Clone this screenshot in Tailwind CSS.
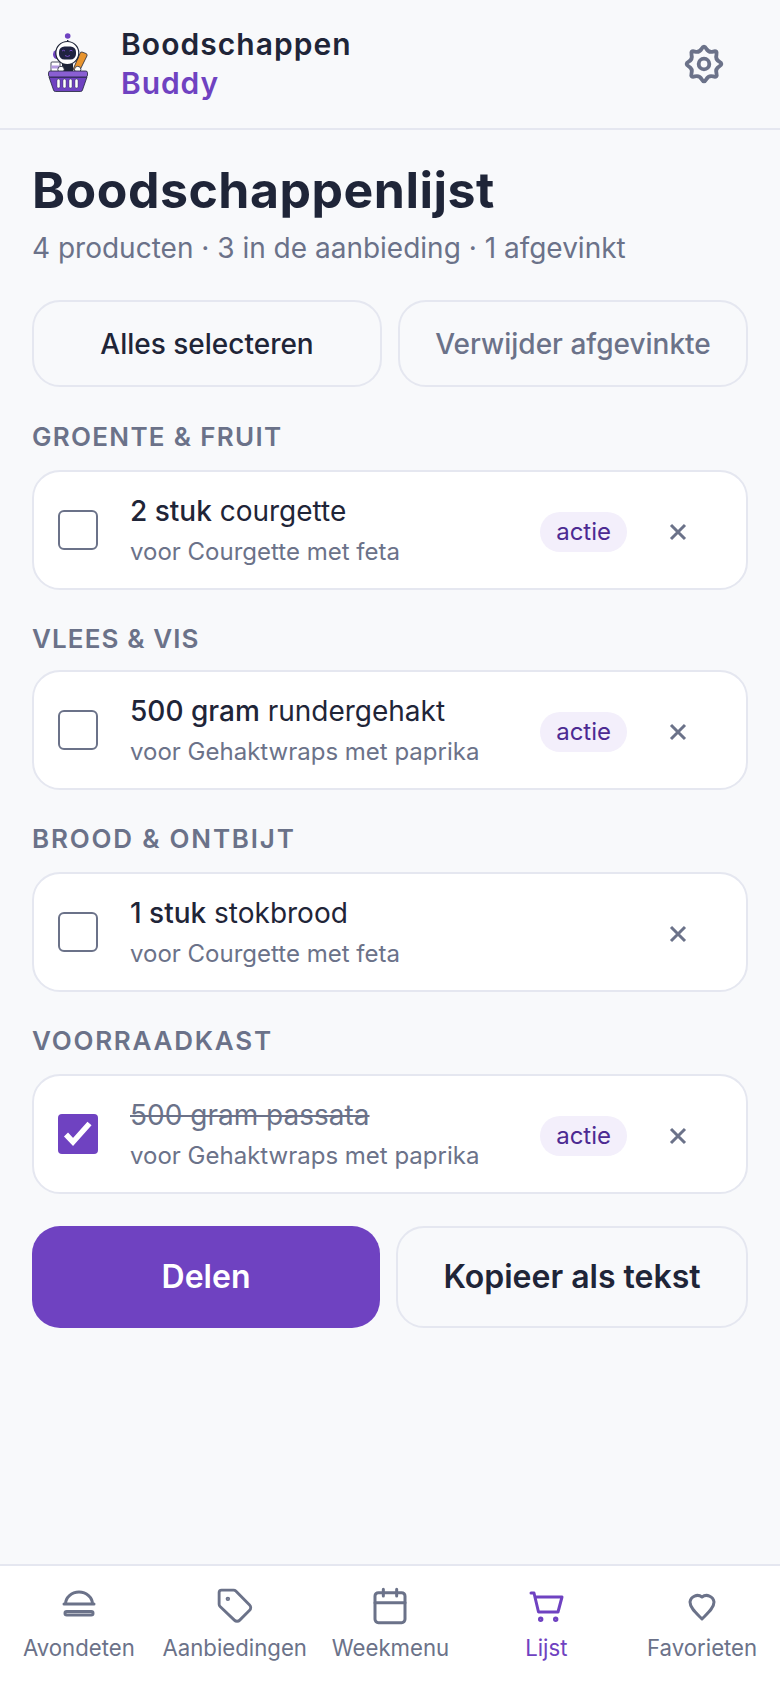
<!DOCTYPE html>
<html lang="nl">
<head>
  <meta charset="UTF-8" />
  <meta name="viewport" content="width=device-width, initial-scale=1.0" />
  <title>Boodschappenlijst</title>
  <script src="https://cdn.jsdelivr.net/npm/@tailwindcss/browser@4"></script>
</head>
<body class="bg-[#f8f9fb] font-['Inter',sans-serif] text-[#1f2538]">
<div class="h-[1688px] flex flex-col overflow-hidden">

  <!-- header -->
  <header class="h-[130px] shrink-0 flex items-center justify-between pl-[35px] pr-[54px] border-b-2 border-[#e5e7f0]">
    <div class="flex items-center gap-[16px]">
      <!-- logo -->
      <svg class="w-[70px] h-[80px]" viewBox="0 4 70 80">
        <path d="M32.700 20v8" stroke="#1f2538" stroke-width="1.400"/>
        <circle cx="32.700" cy="16" r="2.800" fill="#6f42c1"/>
        <path d="M22 30a4 4.500 0 0 0 0 9z" fill="#6f42c1"/>
        <path d="M47 32l4 1.500a1.800 1.800 0 0 1 1 2.300L44 52l-6-2.500 7-16a1.800 1.800 0 0 1 2-1.500z" fill="#e8952f" stroke="#1f2538" stroke-width="0.800"/>
        <circle cx="32.300" cy="33" r="11.500" fill="#fff" stroke="#1f2538" stroke-width="1.200"/>
        <rect x="24" y="26.500" width="17" height="13" rx="5.500" fill="#1f2340"/>
        <path d="M27 31q1.500-1.500 3 0M34.500 31q1.500-1.500 3 0M30 35.500q2.500 2 5 0" stroke="#7c4fd0" stroke-width="0.900" fill="none"/>
        <rect x="27" y="44" width="11" height="8" fill="#1f2538"/>
        <rect x="16" y="42" width="9" height="10" rx="1" fill="#fff" stroke="#1f2538" stroke-width="0.800"/>
        <rect x="16.400" y="45.500" width="8.200" height="3" fill="#b49ae0"/>
        <circle cx="26" cy="49.500" r="3.200" fill="#fff" stroke="#1f2538" stroke-width="0.800"/>
        <circle cx="42.700" cy="49.500" r="3.200" fill="#fff" stroke="#1f2538" stroke-width="0.800"/>
        <path d="M14 57h38l-4.500 13a2 2 0 0 1-2 1.500h-25a2 2 0 0 1-2-1.500z" fill="#6f42c1" stroke="#1f2538" stroke-width="0.800"/>
        <rect x="13.500" y="51" width="39" height="6" rx="1.800" fill="#8a5fd3" stroke="#1f2538" stroke-width="0.800"/>
        <g fill="#fff" stroke="#1f2538" stroke-width="0.400"><rect x="22" y="59" width="3" height="9" rx="1.500"/><rect x="28" y="59" width="3" height="9" rx="1.500"/><rect x="34" y="59" width="3" height="9" rx="1.500"/><rect x="40" y="59" width="3" height="9" rx="1.500"/></g>
      </svg>
      <div class="font-semibold text-[30px] leading-[39px] tracking-[1.050px]">
        <div>Boodschappen</div>
        <div class="text-[#6f42c1] tracking-[0.900px]">Buddy</div>
      </div>
    </div>
    <svg class="w-[44px] h-[44px] text-[#6b7289]" viewBox="0 0 24 24" fill="none" stroke="currentColor" stroke-width="2.100" stroke-linecap="round" stroke-linejoin="round">
      <path d="M10.735 3.650Q12 1.400 13.265 3.650T17.015 5.200T18.800 6.985T20.350 10.735T20.350 13.265T18.800 17.015T17.015 18.800T13.265 20.350T10.735 20.350T6.985 18.800T5.200 17.015T3.650 13.265T3.650 10.735T5.200 6.985T6.985 5.200T10.735 3.650z"/>
      <circle cx="12" cy="12" r="2.900"/>
    </svg>
  </header>

  <!-- content -->
  <main class="flex-1 px-[32px] pt-[28px]">
    <h1 class="font-bold text-[50px] leading-[64px] tracking-[0.500px]">Boodschappenlijst</h1>
    <p class="text-[28px] leading-[40px] text-[#6b7289] mt-[6px]">4 producten · 3 in de aanbieding · 1 afgevinkt</p>

    <div class="grid grid-cols-2 gap-[16px] mt-[32px]">
      <button class="h-[87px] rounded-[28px] border-2 border-[#e5e7f0] text-[28px] font-medium">Alles selecteren</button>
      <button class="h-[87px] rounded-[28px] border-2 border-[#e5e7f0] text-[28px] font-medium text-[#6b7289]">Verwijder afgevinkte</button>
    </div>

    <h2 class="mt-[32px] text-[26px] leading-[36px] font-semibold tracking-[1.300px] text-[#6b7289]">GROENTE &amp; FRUIT</h2>
    <div class="mt-[15px] h-[120px] rounded-[28px] border-2 border-[#e5e7f0] bg-white flex items-center pl-[24px] pr-[59px]">
      <span class="w-[40px] h-[40px] shrink-0 rounded-[6px] border-2 border-[#6b7289] bg-white"></span>
      <div class="ml-[32px] flex-1">
        <div class="text-[28px] leading-[40px]"><span class="font-medium">2 stuk</span> courgette</div>
        <div class="text-[24px] leading-[34px] text-[#6b7289] mt-[4px]">voor Courgette met feta</div>
      </div>
      <span class="mt-[4px] h-[40px] px-[16px] rounded-full bg-[#f3effb] text-[#4c2a92] text-[24px] leading-[40px]">actie</span>
      <svg class="mt-[4px] ml-[42px] w-[18px] h-[18px] text-[#6b7289]" viewBox="0 0 18 18" fill="none" stroke="currentColor" stroke-width="3"><path d="M2 2l14 14M16 2L2 16"/></svg>
    </div>

    <h2 class="mt-[31px] text-[26px] leading-[36px] font-semibold tracking-[1.100px] text-[#6b7289]">VLEES &amp; VIS</h2>
    <div class="mt-[13px] h-[120px] rounded-[28px] border-2 border-[#e5e7f0] bg-white flex items-center pl-[24px] pr-[59px]">
      <span class="w-[40px] h-[40px] shrink-0 rounded-[6px] border-2 border-[#6b7289] bg-white"></span>
      <div class="ml-[32px] flex-1">
        <div class="text-[28px] leading-[40px]"><span class="font-medium">500 gram</span> rundergehakt</div>
        <div class="text-[24px] leading-[34px] text-[#6b7289] mt-[4px]">voor Gehaktwraps met paprika</div>
      </div>
      <span class="mt-[4px] h-[40px] px-[16px] rounded-full bg-[#f3effb] text-[#4c2a92] text-[24px] leading-[40px]">actie</span>
      <svg class="mt-[4px] ml-[42px] w-[18px] h-[18px] text-[#6b7289]" viewBox="0 0 18 18" fill="none" stroke="currentColor" stroke-width="3"><path d="M2 2l14 14M16 2L2 16"/></svg>
    </div>

    <h2 class="mt-[31px] text-[26px] leading-[36px] font-semibold tracking-[1.800px] text-[#6b7289]">BROOD &amp; ONTBIJT</h2>
    <div class="mt-[15px] h-[120px] rounded-[28px] border-2 border-[#e5e7f0] bg-white flex items-center pl-[24px] pr-[59px]">
      <span class="w-[40px] h-[40px] shrink-0 rounded-[6px] border-2 border-[#6b7289] bg-white"></span>
      <div class="ml-[32px] flex-1">
        <div class="text-[28px] leading-[40px]"><span class="font-medium">1 stuk</span> stokbrood</div>
        <div class="text-[24px] leading-[34px] text-[#6b7289] mt-[4px]">voor Courgette met feta</div>
      </div>
      <svg class="mt-[4px] ml-[42px] w-[18px] h-[18px] text-[#6b7289]" viewBox="0 0 18 18" fill="none" stroke="currentColor" stroke-width="3"><path d="M2 2l14 14M16 2L2 16"/></svg>
    </div>

    <h2 class="mt-[31px] text-[26px] leading-[36px] font-semibold tracking-[1.750px] text-[#6b7289]">VOORRAADKAST</h2>
    <div class="mt-[15px] h-[120px] rounded-[28px] border-2 border-[#e5e7f0] bg-white flex items-center pl-[24px] pr-[59px]">
      <span class="w-[40px] h-[40px] shrink-0 rounded-[4px] bg-[#6f42c1] flex items-center justify-center">
        <svg class="w-[30px] h-[30px]" viewBox="0 0 30 30" fill="none" stroke="#fff" stroke-width="5.500"><path d="M3 15.500l7 7.500L26.500 4.500"/></svg>
      </span>
      <div class="ml-[32px] flex-1">
        <div class="text-[28px] leading-[40px] line-through text-[#6b7289]">500 gram passata</div>
        <div class="text-[24px] leading-[34px] text-[#6b7289] mt-[4px]">voor Gehaktwraps met paprika</div>
      </div>
      <span class="mt-[4px] h-[40px] px-[16px] rounded-full bg-[#f3effb] text-[#4c2a92] text-[24px] leading-[40px]">actie</span>
      <svg class="mt-[4px] ml-[42px] w-[18px] h-[18px] text-[#6b7289]" viewBox="0 0 18 18" fill="none" stroke="currentColor" stroke-width="3"><path d="M2 2l14 14M16 2L2 16"/></svg>
    </div>

    <div class="flex gap-[16px] mt-[32px]">
      <button class="w-[348px] h-[102px] rounded-[28px] bg-[#6f42c1] text-white text-[32px] font-semibold">Delen</button>
      <button class="flex-1 h-[102px] rounded-[28px] border-2 border-[#e5e7f0] text-[32px] font-semibold">Kopieer als tekst</button>
    </div>
  </main>

  <!-- bottom nav -->
  <nav class="h-[124px] shrink-0 bg-white border-t-2 border-[#e5e7f0] grid grid-cols-5 pt-[20px] pl-[1px] text-[#6b7289] text-[22.200px] leading-[30px]">
    <a class="flex flex-col items-center gap-[7px]">
      <svg class="w-[40px] h-[40px]" viewBox="0 0 40 40" fill="none" stroke="currentColor" stroke-width="3" stroke-linecap="round"><path d="M6.500 18a13.500 12 0 0 1 27 0M5 18h30"/><rect x="6" y="25.500" width="28" height="3.500" rx="1.750"/></svg>
      <span>Avondeten</span>
    </a>
    <a class="flex flex-col items-center gap-[7px]">
      <svg class="w-[40px] h-[40px]" viewBox="-0.600 -0.600 25.200 25.200" fill="none" stroke="currentColor" stroke-width="1.800" stroke-linecap="round" stroke-linejoin="round"><path d="M2 3.500A1.500 1.500 0 0 1 3.500 2h7.600a2 2 0 0 1 1.400.6l8.700 8.700a2.400 2.400 0 0 1 0 3.400l-6.200 6.200a2.400 2.400 0 0 1-3.400 0L2.600 12.300a2 2 0 0 1-.6-1.400z"/><circle cx="7.500" cy="7.500" r=".5" fill="currentColor"/></svg>
      <span>Aanbiedingen</span>
    </a>
    <a class="flex flex-col items-center gap-[7px]">
      <svg class="w-[40px] h-[40px]" viewBox="0 0 24 24" fill="none" stroke="currentColor" stroke-width="1.800" stroke-linecap="round" stroke-linejoin="round"><path d="M8 2v4M16 2v4"/><rect width="18" height="18" x="3" y="4" rx="2"/><path d="M3 10h18"/></svg>
      <span>Weekmenu</span>
    </a>
    <a class="flex flex-col items-center gap-[7px] text-[#6f42c1]">
      <svg class="w-[40px] h-[40px]" viewBox="0 0 40 40" fill="none" stroke="currentColor" stroke-width="3" stroke-linecap="round" stroke-linejoin="round"><path d="M5 7h3l4.500 19h19.500L36 11H9.500"/><circle cx="14.700" cy="33.300" r="1.200"/><circle cx="29.700" cy="33.300" r="1.200"/></svg>
      <span>Lijst</span>
    </a>
    <a class="flex flex-col items-center gap-[7px]">
      <svg class="w-[40px] h-[40px]" viewBox="0 0 40 40" fill="none" stroke="currentColor" stroke-width="3" stroke-linecap="round" stroke-linejoin="round"><path d="M20 33C14 27 8 22 8 16a7.500 7.500 0 0 1 12-5a7.500 7.500 0 0 1 12 5C32 22 26 27 20 33z"/></svg>
      <span>Favorieten</span>
    </a>
  </nav>
</div>
</body>
</html>
